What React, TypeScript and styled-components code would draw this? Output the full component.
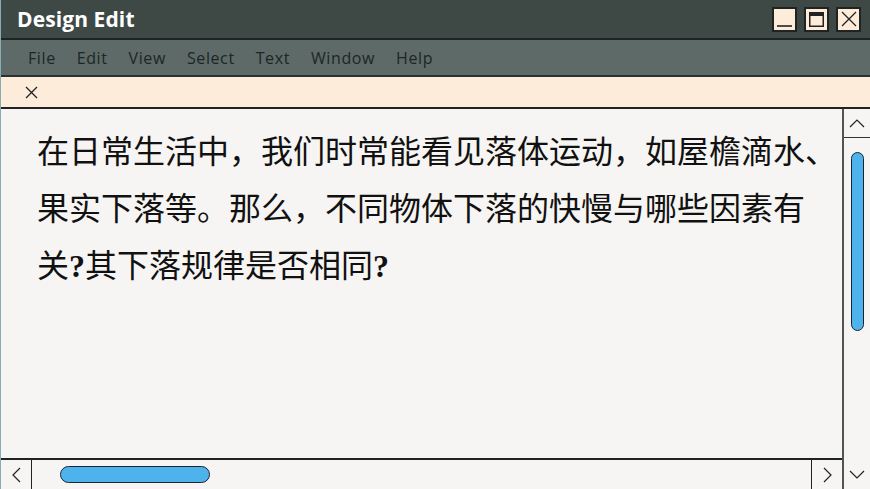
import React from 'react';
import styled, { createGlobalStyle } from 'styled-components';

const GlobalStyle = createGlobalStyle`
  html, body {
    margin: 0;
    padding: 0;
    height: 100%;
    overflow: hidden;
    background: #f6f5f3;
  }
  #root {
    height: 100%;
  }
`;

const Window = styled.div`
  display: flex;
  flex-direction: column;
  height: 100vh;
  box-sizing: border-box;
  border-left: 1px solid #86aeb0;
  font-family: 'Open Sans', 'Liberation Sans', sans-serif;
`;

const TitleBar = styled.div`
  display: flex;
  align-items: center;
  justify-content: space-between;
  height: 38px;
  padding: 0 9px 0 16px;
  background: #3e4946;
  border-bottom: 2px solid #1d2422;
  flex-shrink: 0;
`;

const Title = styled.div`
  color: #ffffff;
  font-family: 'Open Sans', 'Liberation Sans', sans-serif;
  font-weight: 700;
  font-size: 21px;
  letter-spacing: 0.1px;
`;

const WinButtons = styled.div`
  display: flex;
  gap: 7px;
`;

const WinButton = styled.div`
  width: 21px;
  height: 21px;
  border: 2px solid #1f2322;
  background: #fdecda;
  display: flex;
  align-items: center;
  justify-content: center;
  svg {
    display: block;
  }
`;

const MenuBar = styled.div`
  display: flex;
  align-items: center;
  height: 35px;
  padding-left: 27px;
  gap: 21px;
  background: #5d6a68;
  border-bottom: 2px solid #2a302e;
  flex-shrink: 0;
`;

const MenuItem = styled.span`
  color: #1c2624;
  font-size: 16px;
  letter-spacing: 0.6px;
`;

const InfoBar = styled.div`
  display: flex;
  align-items: center;
  height: 30px;
  padding-left: 24px;
  background: #fdecda;
  border-bottom: 2px solid #1f2322;
  flex-shrink: 0;
`;

const Body = styled.div`
  flex: 1;
  display: grid;
  grid-template-columns: 1fr 28px;
  grid-template-rows: 1fr 31px;
  min-height: 0;
`;

const Content = styled.div`
  grid-column: 1;
  grid-row: 1;
  background: #f6f5f3;
  padding: 15px 0 0 36px;
  font-family: 'Liberation Serif', 'Noto Sans CJK SC', serif;
  font-size: 32px;
  line-height: 57px;
  color: #111111;
  overflow: hidden;
`;

const Line = styled.div`
  white-space: nowrap;
`;

const Mark = styled.span`
  font-weight: 700;
`;

const VScroll = styled.div`
  grid-column: 2;
  grid-row: 1 / span 2;
  display: flex;
  flex-direction: column;
  background: #f6f5f3;
  border-left: 2px solid #505452;
`;

const ArrowButton = styled.div<{ $edge?: 'top' | 'left' | 'right' }>`
  display: flex;
  align-items: center;
  justify-content: center;
  flex-shrink: 0;
  width: ${({ $edge }) => ($edge === 'left' || $edge === 'right' ? '30px' : 'auto')};
  height: ${({ $edge }) => ($edge === 'top' ? '28px' : $edge ? 'auto' : '29px')};
  border-bottom: ${({ $edge }) => ($edge === 'top' ? '1px solid #333' : 'none')};
  border-right: ${({ $edge }) => ($edge === 'left' ? '1px solid #222' : 'none')};
  border-left: ${({ $edge }) => ($edge === 'right' ? '1px solid #222' : 'none')};
`;

const VTrack = styled.div`
  flex: 1;
  display: flex;
  justify-content: center;
  padding-top: 14px;
`;

const VThumb = styled.div`
  width: 11px;
  height: 177px;
  background: #4eb3ec;
  border: 1.5px solid #1b2530;
  border-radius: 8px;
`;

const HScroll = styled.div`
  grid-column: 1;
  grid-row: 2;
  display: flex;
  background: #f6f5f3;
  border-top: 2px solid #1f2322;
`;

const HTrack = styled.div`
  flex: 1;
  display: flex;
  align-items: center;
  padding-left: 28px;
`;

const HThumb = styled.div`
  width: 148px;
  height: 15px;
  background: #4eb3ec;
  border: 1.5px solid #1b2530;
  border-radius: 9px;
`;

const Chevron = ({ dir }: { dir: 'up' | 'down' | 'left' | 'right' }) => {
  const pts = {
    up: '1,8 8,1 15,8',
    down: '1,1 8,8 15,1',
    left: '8,1 1,8 8,15',
    right: '1,1 8,8 1,15',
  }[dir];
  const vertical = dir === 'up' || dir === 'down';
  return (
    <svg width={vertical ? 16 : 9} height={vertical ? 9 : 16} viewBox={vertical ? '0 0 16 9' : '0 0 9 16'}>
      <polyline points={pts} fill="none" stroke="#222" strokeWidth="1.2" />
    </svg>
  );
};

const menus = ['File', 'Edit', 'View', 'Select', 'Text', 'Window', 'Help'];

const App = () => {
  return (
    <>
      <GlobalStyle />
      <Window>
        <TitleBar>
          <Title>Design Edit</Title>
          <WinButtons>
            <WinButton>
              <svg width="15" height="17" viewBox="0 0 15 17">
                <line x1="0" y1="15" x2="15" y2="15" stroke="#222" strokeWidth="1.6" />
              </svg>
            </WinButton>
            <WinButton>
              <svg width="15" height="15" viewBox="0 0 15 15">
                <rect x="0.75" y="0.75" width="13.5" height="13.5" fill="none" stroke="#222" strokeWidth="1.5" />
                <rect x="0" y="0" width="15" height="4" fill="#222" />
              </svg>
            </WinButton>
            <WinButton>
              <svg width="16" height="16" viewBox="0 0 16 16">
                <path d="M1 1 L15 15 M15 1 L1 15" stroke="#222" strokeWidth="1.3" />
              </svg>
            </WinButton>
          </WinButtons>
        </TitleBar>
        <MenuBar>
          {menus.map((m) => (
            <MenuItem key={m}>{m}</MenuItem>
          ))}
        </MenuBar>
        <InfoBar>
          <svg width="13" height="13" viewBox="0 0 13 13">
            <path d="M1 1 L12 12 M12 1 L1 12" stroke="#222" strokeWidth="1.3" />
          </svg>
        </InfoBar>
        <Body>
          <Content>
            <Line>在日常生活中，我们时常能看见落体运动，如屋檐滴水、</Line>
            <Line>果实下落等。那么，不同物体下落的快慢与哪些因素有</Line>
            <Line>
              关<Mark>?</Mark>其下落规律是否相同<Mark>?</Mark>
            </Line>
          </Content>
          <VScroll>
            <ArrowButton $edge="top">
              <Chevron dir="up" />
            </ArrowButton>
            <VTrack>
              <VThumb />
            </VTrack>
            <ArrowButton>
              <Chevron dir="down" />
            </ArrowButton>
          </VScroll>
          <HScroll>
            <ArrowButton $edge="left">
              <Chevron dir="left" />
            </ArrowButton>
            <HTrack>
              <HThumb />
            </HTrack>
            <ArrowButton $edge="right">
              <Chevron dir="right" />
            </ArrowButton>
          </HScroll>
        </Body>
      </Window>
    </>
  );
};

export default App;
